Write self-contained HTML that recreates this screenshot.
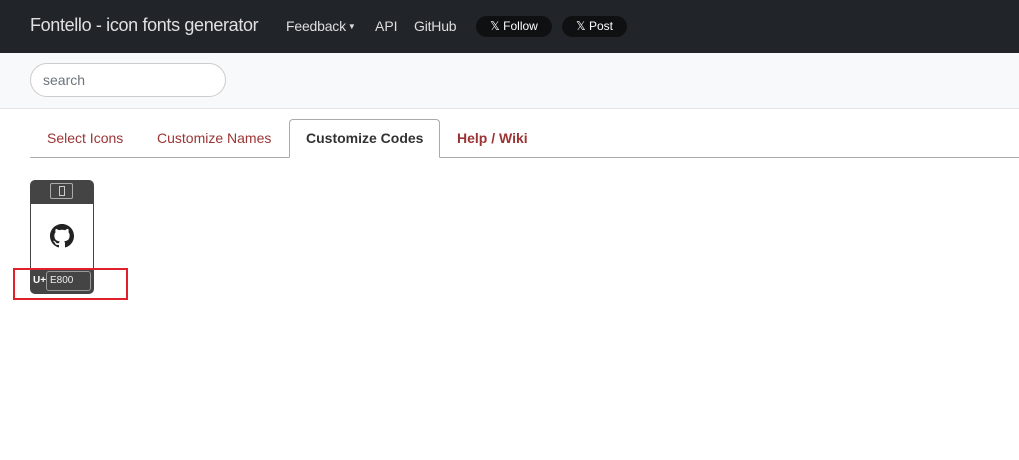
<!DOCTYPE html><html><head><style>
body{margin:0;width:1019px;height:460px;background:#fff;font-family:"Liberation Sans",sans-serif;position:relative;overflow:hidden}
.nav{position:absolute;left:0;top:0;width:1019px;height:53px;background:#212529}
.t{position:absolute;white-space:nowrap}
.pill{position:absolute;top:16px;height:21px;border-radius:11px;background:#0f1012;color:#fff;font-size:12px;line-height:21px;text-align:center}
.bar{position:absolute;left:0;top:53px;width:1019px;height:55px;background:#f8f9fa;border-bottom:1px solid #e5e5e5}
.search{position:absolute;left:30px;top:63px;height:34px;border:1px solid #ccc;border-radius:17px;background:#fff;font-size:14px;color:#6c757d;line-height:32px;padding-left:12px;box-sizing:border-box;width:196px}
.tabs{position:absolute;left:30px;top:157px;width:989px;border-top:1px solid #aaa}
.tab{position:absolute;top:130px;font-size:14px;color:#9b3434}
.act{position:absolute;left:289px;top:119px;border:1px solid #aaa;border-bottom:1px solid #fff;border-radius:4px 4px 0 0;background:#fff;box-sizing:border-box;width:151px;height:39px}
</style></head><body>
<div class="nav"></div>
<div class="t" style="left:30px;top:15px;font-size:18px;color:#e0e0e0;letter-spacing:-0.35px">Fontello - icon fonts generator</div>
<div class="t" style="left:286px;top:18px;font-size:14px;color:#ddd;letter-spacing:-0.2px">Feedback<span style="font-size:8px;vertical-align:2px"> ▼</span></div>
<div class="t" style="left:375px;top:18px;font-size:14px;color:#ddd">API</div>
<div class="t" style="left:414px;top:18px;font-size:14px;color:#ddd;letter-spacing:-0.2px">GitHub</div>
<div class="pill" style="left:476px;width:76px">𝕏 Follow</div>
<div class="pill" style="left:562px;width:65px">𝕏 Post</div>
<div class="bar"></div>
<div class="search">search</div>
<div class="tabs"></div>
<div class="act"></div>
<div class="tab" style="left:47px">Select Icons</div>
<div class="tab" style="left:157px">Customize Names</div>
<div class="tab" style="left:306px;color:#333;font-weight:bold">Customize Codes</div>
<div class="tab" style="left:457px;font-weight:bold">Help / Wiki</div>
<div style="position:absolute;left:30px;top:180px;width:64px;height:114px;background:#444;border-radius:5px"></div>
<div style="position:absolute;left:31px;top:204px;width:62px;height:66px;background:#fff"></div>
<div style="position:absolute;left:50px;top:183px;width:23px;height:16px;border:1px solid #aaa;border-radius:2px;box-sizing:border-box"></div>
<div style="position:absolute;left:59px;top:186px;width:6px;height:10px;border:1px solid #ccc;box-sizing:border-box"></div>
<svg style="position:absolute;left:50px;top:224px" width="24" height="24" viewBox="0 0 16 16"><path fill="#222" d="M8 0C3.58 0 0 3.580 0 8c0 3.54 2.29 6.53 5.47 7.59.4.07.55-.17.55-.38v-1.330c-2.23.48-2.7-1.07-2.7-1.07-.36-.92-.89-1.17-.89-1.17-.73-.5.06-.49.06-.49.8.06 1.23.83 1.23.83.72 1.23 1.87.87 2.33.67.07-.52.28-.87.51-1.07-1.78-.2-3.65-.89-3.650-3.95 0-.87.31-1.59.82-2.15-.08-.2-.36-1.02.08-2.12 0 0 .67-.21 2.2.82A7.6 7.6 0 0 1 8 3.86c.68 0 1.36.09 2 .27 1.53-1.04 2.2-.82 2.2-.82.44 1.1.16 1.92.08 2.12.51.56.82 1.27.82 2.15 0 3.07-1.870 3.75-3.65 3.95.29.25.54.73.54 1.48v2.2c0 .21.15.46.55.38A8 8 0 0 0 16 8c0-4.42-3.58-8-8-8z"/></svg>
<div class="t" style="left:33px;top:275px;font-size:10px;color:#fff;font-weight:bold">U+</div>
<div style="position:absolute;left:46px;top:271px;width:45px;height:20px;border:1px solid #999;border-radius:3px;box-sizing:border-box;font-size:10px;color:#eee;line-height:18px;padding-left:3px">E800</div>
<div style="position:absolute;left:13px;top:268px;width:115px;height:32px;border:2px solid #e0202a;box-sizing:border-box"></div>
</body></html>
